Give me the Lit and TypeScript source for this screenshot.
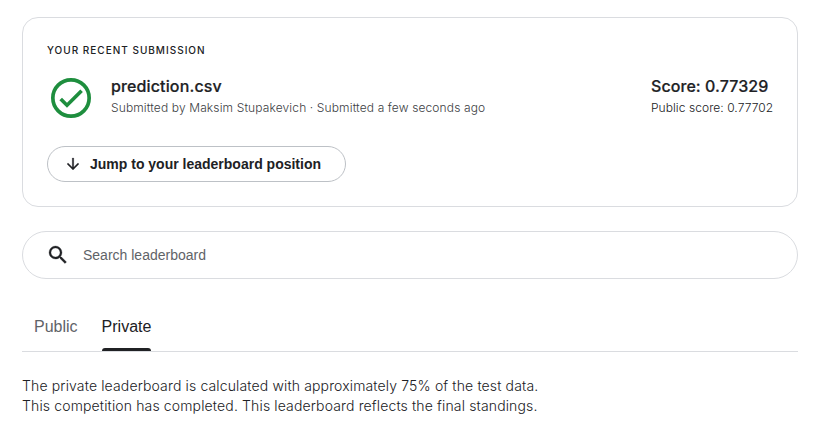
import { LitElement, html, css } from "lit";
import { customElement, state } from "lit/decorators.js";
import { classMap } from "lit/directives/class-map.js";

@customElement("app-root")
export class AppRoot extends LitElement {
  static styles = css`
    :host {
      display: block;
      box-sizing: border-box;
      height: 433px;
      padding: 17px 25px 0 22px;
      background: #fff;
      color: #202124;
      font-family: Inter, sans-serif;
      overflow: hidden;
    }
    * { box-sizing: border-box; }
    svg { display: block; flex: none; }
    .card {
      height: 190px;
      border: 1px solid #dadce0;
      border-radius: 16px;
      padding: 25px 24px 0;
    }
    .label {
      font-size: 10px;
      line-height: 14px;
      font-weight: 500;
      letter-spacing: 1px;
    }
    .row { display: flex; height: 40px; margin-top: 21px; }
    .check { width: 48px; height: 48px; margin-top: -4px; }
    .file { flex: 1; margin-left: 16px; }
    .title { font-size: 16px; line-height: 20px; font-weight: 500; letter-spacing: 0.13px; margin-top: -2px; -webkit-text-stroke: 0.2px #202124; }
    .sub { font-size: 12px; line-height: 16px; font-weight: 300; letter-spacing: 0.13px; margin-top: 4px; color: #3c4043; }
    .score { width: 122px; white-space: nowrap; }
    .score .title { letter-spacing: 0.07px; }
    .score .sub { color: #202124; letter-spacing: 0.06px; }
    .jump {
      display: flex;
      align-items: center;
      width: 299px;
      height: 36px;
      margin-top: 28px;
      padding: 0 0 0 16px;
      gap: 8px;
      border: 1px solid #bdc1c6;
      border-radius: 18px;
      background: #fff;
      color: #202124;
      font: 700 14px/20px "Liberation Sans", Arial, sans-serif;
      white-space: nowrap;
    }
    .search {
      display: flex;
      align-items: center;
      height: 48px;
      margin-top: 24px;
      padding-left: 23px;
      gap: 13px;
      border: 1px solid #dadce0;
      border-radius: 24px;
    }
    input {
      flex: 1;
      border: 0;
      padding: 0;
      outline: none;
      background: none;
      font: 14px/20px "Liberation Sans", Arial, sans-serif;
    }
    input::placeholder { color: #5f6368; opacity: 1; }
    .tabs {
      display: flex;
      gap: 24px;
      height: 49px;
      margin-top: 24px;
      padding-left: 12px;
      border-bottom: 1px solid #dadce0;
    }
    .tab {
      display: flex;
      flex-direction: column;
      justify-content: space-between;
      padding: 14px 0 0;
      border: 0;
      background: none;
      color: #5f6368;
      font: 16px/20px "Liberation Sans", Arial, sans-serif;
    }
    .tab::after { content: ""; width: 100%; height: 3px; border-radius: 3px 3px 0 0; }
    .active { color: #202124; }
    .active::after { background: #202124; }
    .note { margin: 24px 0 0; font-size: 14px; line-height: 20px; font-weight: 300; letter-spacing: 0.14px; }
  `;

  @state() private tab = "Private";

  render() {
    return html`
      <section class="card">
        <div class="label">YOUR RECENT SUBMISSION</div>
        <div class="row">
          <svg class="check" viewBox="0 0 24 24">
            <circle cx="12" cy="12" r="9.08" fill="none" stroke="#1e8e3e" stroke-width="1.84" />
            <path fill="#1e8e3e" d="M16.65 7.8L10 14.35l-2.5-2.5L6.2 13.1l3.8 3.75 7.95-7.8z"/>
          </svg>
          <div class="file">
            <div class="title">prediction.csv</div>
            <div class="sub">Submitted by Maksim Stupakevich · Submitted a few seconds ago</div>
          </div>
          <div class="score">
            <div class="title">Score: 0.77329</div>
            <div class="sub">Public score: 0.77702</div>
          </div>
        </div>
        <button class="jump">
          <svg width="18" height="18" viewBox="0 0 24 24" fill="#202124" stroke="#202124" stroke-width="0.3">
            <path d="M20 12l-1.41-1.41L13 16.17V4h-2v12.17l-5.58-5.59L4 12l8 8 8-8z"/>
          </svg>
          Jump to your leaderboard position
        </button>
      </section>
      <div class="search">
        <svg width="24" height="24" viewBox="0 0 24 24" fill="#202124" stroke="#202124" stroke-width="0.3">
          <path d="M15.5 14h-.79l-.28-.27A6.471 6.471 0 0 0 16 9.5 6.5 6.5 0 1 0 9.5 16c1.61 0 3.09-.59 4.23-1.57l.27.28v.79l5 4.99L20.49 19l-4.99-5zm-6 0C7.01 14 5 11.99 5 9.5S7.01 5 9.5 5 14 7.01 14 9.5 11.99 14 9.5 14z"/>
        </svg>
        <input placeholder="Search leaderboard" />
      </div>
      <nav class="tabs">
        ${["Public", "Private"].map(
          (name) => html`<button
            class=${classMap({ tab: true, active: this.tab === name })}
            @click=${() => (this.tab = name)}
          >${name}</button>`
        )}
      </nav>
      <p class="note">
        The private leaderboard is calculated with approximately 75% of the test data.<br />
        This competition has completed. This leaderboard reflects the final standings.
      </p>
    `;
  }
}
